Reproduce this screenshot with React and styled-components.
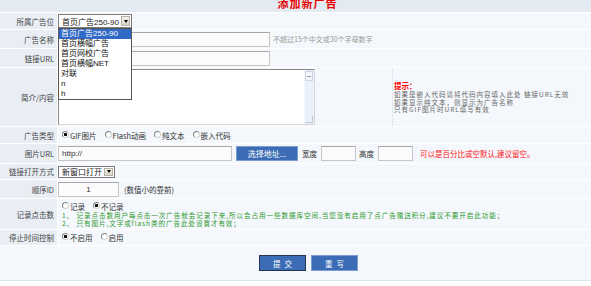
import React from 'react';
import styled, { createGlobalStyle } from 'styled-components';

const GlobalStyle = createGlobalStyle`
  body {
    margin: 0;
    background: #fff;
    font-family: "Noto Sans CJK SC", "Liberation Sans", sans-serif;
    font-size: 7.5px;
    color: #333;
  }
  * { box-sizing: border-box; }
`;

const Page = styled.div`
  width: 591px;
  background: #fff;
`;

const Header = styled.div`
  height: 12px;
  margin-bottom: 1px;
  background: #e4eaf2;
  overflow: hidden;
  display: flex;
  justify-content: center;
  padding-left: 24px;
`;

const Title = styled.h1`
  margin: -4px 0 0;
  font-size: 11px;
  line-height: 14px;
  font-weight: bold;
  color: #e60000;
  letter-spacing: 1px;
`;

const Row = styled.div`
  display: grid;
  grid-template-columns: 57px 1fr;
  column-gap: 1px;
  height: ${p => p.$h}px;
  margin-bottom: 1px;
`;

const Label = styled.div`
  background: #e9eef5;
  display: flex;
  align-items: center;
  justify-content: flex-end;
  padding-right: 3px;
  white-space: nowrap;
  color: #444;
`;

const Cell = styled.div`
  position: relative;
  background: #f4f7fb;
  display: flex;
  flex-direction: ${p => (p.$column ? 'column' : 'row')};
  align-items: ${p => (p.$column ? 'flex-start' : 'center')};
  justify-content: ${p => (p.$column ? 'center' : 'flex-start')};
  padding-left: ${p => p.$pad || 0}px;
  white-space: nowrap;
`;

const Select = styled.div`
  width: ${p => p.$w}px;
  height: ${p => p.$h}px;
  border: 1px solid #7a7a7a;
  background: #fff;
  display: flex;
  align-items: center;
  justify-content: space-between;
  padding-left: 3px;
  font-family: "Liberation Sans", "Noto Sans CJK SC", sans-serif;
  font-size: 8px;
  color: #222;
`;

const SelectArrow = styled.span`
  width: 9px;
  height: calc(100% - 2px);
  margin-right: 1px;
  background: linear-gradient(#f6f4ee, #d9d5c6);
  border: 1px solid #b5b2a5;
  display: flex;
  align-items: center;
  justify-content: center;
  &::after {
    content: '';
    border-left: 2.5px solid transparent;
    border-right: 2.5px solid transparent;
    border-top: 3px solid #000;
  }
`;

const OptionList = styled.div`
  position: absolute;
  top: 15px;
  left: 0;
  width: 74px;
  z-index: 10;
  background: #fff;
  border: 1px solid #555;
  font-family: "Liberation Sans", "Noto Sans CJK SC", sans-serif;
  font-size: 8px;
`;

const Option = styled.div`
  height: 10px;
  line-height: 10px;
  padding-left: 2px;
  background: ${p => (p.$active ? '#3169c6' : '#fff')};
  color: ${p => (p.$active ? '#fff' : '#111')};
`;

const TextInput = styled.input`
  width: ${p => p.$w}px;
  height: 15px;
  margin: 0;
  border: 1px solid #c6c6c6;
  border-top-color: #a8a8a8;
  background: #fbfbfb;
  font-family: "Liberation Sans", "Noto Sans CJK SC", sans-serif;
  font-size: 8px;
  padding: 0 3px;
  color: #333;
  outline: none;
  text-align: ${p => (p.$center ? 'center' : 'left')};
`;

const Hint = styled.span`
  margin-left: 3px;
  font-size: 7px;
  color: #999;
`;

const AreaCell = styled.div`
  width: 334px;
  height: 100%;
  display: flex;
  align-items: center;
`;

const AreaBox = styled.div`
  width: 257px;
  height: 56px;
  display: flex;
  border: 1px solid;
  border-color: #8a8a8a #d6d6d6 #d6d6d6 #8a8a8a;
  background: #fff;
`;

const Area = styled.textarea`
  flex: 1;
  border: none;
  resize: none;
  outline: none;
  background: #fff;
  margin: 0;
`;

const ScrollBar = styled.div`
  width: 10px;
  display: flex;
  flex-direction: column;
  background: #eaf1fb;
  border-left: 1px solid #f4f7fb;
`;

const ScrollButton = styled.div`
  height: 10px;
  margin: 1px 1px 0 0;
  border: 1px solid #c9d4e3;
  background: #f2f5f9;
  display: flex;
  align-items: center;
  justify-content: center;
  &::after {
    content: '';
    width: 4px;
    border-top: 1px solid #8d9cb2;
  }
`;

const ScrollTrack = styled.div`
  flex: 1;
`;

const ScrollGrip = styled.div`
  height: 7px;
  margin: 0 1px 1px 0;
  border-right: 1px solid #bfc9d6;
  border-bottom: 1px solid #bfc9d6;
`;

const TipCell = styled.div`
  flex: 1;
  height: 100%;
  border-left: 1px solid #e2e8f0;
  padding: 2px 0 0 1px;
  display: flex;
  flex-direction: column;
  justify-content: center;
  font-size: 6.5px;
  letter-spacing: 1px;
  line-height: 7.8px;
  color: #666;
`;

const TipTitle = styled.div`
  color: #f00;
  font-weight: bold;
  font-size: 7.5px;
  letter-spacing: 0;
  line-height: 8px;
  margin-bottom: 1px;
`;

const RadioGroup = styled.div`
  display: flex;
  align-items: center;
  gap: 8px;
  height: ${p => p.$h || 10}px;
`;

const RadioLabel = styled.label`
  display: flex;
  align-items: center;
  gap: 1px;
  color: #333;
`;

const Radio = styled.input.attrs({ type: 'radio' })`
  appearance: none;
  width: 7px;
  height: 7px;
  margin: 0 0 2px;
  border: 1px solid;
  border-color: #848484 #d2d2d2 #d2d2d2 #848484;
  border-radius: 50%;
  background: #fff;
  &:checked {
    background: radial-gradient(circle, #111 0 1.4px, #fff 1.9px);
  }
`;

const BlueButton = styled.button`
  height: ${p => p.$h}px;
  width: ${p => p.$w}px;
  margin: 0;
  padding: 0 0 0 ${p => p.$space || 0}px;
  background: #3b6cb5;
  border: 1px solid ${p => (p.$focus ? '#26364f' : '#7b9dd0')};
  color: #fff;
  font-family: "Noto Sans CJK SC", sans-serif;
  font-size: ${p => p.$fs || 7.5}px;
  letter-spacing: ${p => p.$space || 0}px;
`;

const Gap = styled.span`
  display: inline-block;
  width: ${p => p.$w}px;
`;

const Warn = styled.span`
  color: #f22;
`;

const Green = styled.div`
  color: #2f9a2f;
  font-size: 6.6px;
  letter-spacing: 0.9px;
  line-height: 8px;
`;

const Footer = styled.div`
  height: 35px;
  background: #f4f7fb;
  border-bottom: 1px solid #dde3eb;
  display: flex;
  align-items: center;
  justify-content: center;
  gap: 5px;
  padding-left: 26px;
`;

const positions = ['首页广告250-90', '首页横幅广告', '首页网校广告', '首页横幅NET', '对联', 'n', 'h'];

export default function App() {
  return (
    <Page>
      <GlobalStyle />
      <Header>
        <Title>添加新广告</Title>
      </Header>

      <Row $h={16}>
        <Label>所属广告位</Label>
        <Cell>
          <Select $w={74} $h={14}>
            首页广告250-90
            <SelectArrow />
          </Select>
          <OptionList>
            {positions.map((p, i) => (
              <Option key={p} $active={i === 0}>{p}</Option>
            ))}
          </OptionList>
        </Cell>
      </Row>

      <Row $h={18}>
        <Label>广告名称</Label>
        <Cell>
          <TextInput $w={212} />
          <Hint>不超过15个中文或30个字母数字</Hint>
        </Cell>
      </Row>

      <Row $h={18}>
        <Label>链接URL</Label>
        <Cell>
          <TextInput $w={212} />
        </Cell>
      </Row>

      <Row $h={58}>
        <Label>简介/内容</Label>
        <Cell>
          <AreaCell>
            <AreaBox>
              <Area />
              <ScrollBar>
                <ScrollButton />
                <ScrollTrack />
                <ScrollGrip />
              </ScrollBar>
            </AreaBox>
          </AreaCell>
          <TipCell>
            <TipTitle>提示：</TipTitle>
            <div>如果是嵌入代码请将代码内容填入此处 链接URL无效</div>
            <div>如果显示纯文本，则显示为广告名称</div>
            <div>只有GIF图片时URL填写有效</div>
          </TipCell>
        </Cell>
      </Row>

      <Row $h={16}>
        <Label>广告类型</Label>
        <Cell $pad={4}>
          <RadioGroup>
            <RadioLabel><Radio name="type" defaultChecked />GIF图片</RadioLabel>
            <RadioLabel><Radio name="type" />Flash动画</RadioLabel>
            <RadioLabel><Radio name="type" />纯文本</RadioLabel>
            <RadioLabel><Radio name="type" />嵌入代码</RadioLabel>
          </RadioGroup>
        </Cell>
      </Row>

      <Row $h={19}>
        <Label>图片URL</Label>
        <Cell>
          <TextInput $w={174} defaultValue="http://" />
          <Gap $w={4} />
          <BlueButton $w={62} $h={15} $fs={8}>选择地址...</BlueButton>
          <Gap $w={4} />
          宽度
          <Gap $w={4} />
          <TextInput $w={35} />
          <Gap $w={3} />
          高度
          <Gap $w={4} />
          <TextInput $w={35} />
          <Gap $w={7} />
          <Warn>可以是百分比或空默认,建议留空。</Warn>
        </Cell>
      </Row>

      <Row $h={15}>
        <Label>链接打开方式</Label>
        <Cell>
          <Select $w={57} $h={12}>
            新窗口打开
            <SelectArrow />
          </Select>
        </Cell>
      </Row>

      <Row $h={18}>
        <Label>顺序ID</Label>
        <Cell>
          <TextInput $w={61} $center defaultValue="1" />
          <Gap $w={5} />
          (数值小的靠前)
        </Cell>
      </Row>

      <Row $h={30}>
        <Label>记录点击数</Label>
        <Cell $column $pad={4}>
          <RadioGroup>
            <RadioLabel><Radio name="hits" />记录</RadioLabel>
            <RadioLabel><Radio name="hits" defaultChecked />不记录</RadioLabel>
          </RadioGroup>
          <Green>1、 记录点击数用户每点击一次广告就会记录下来,所以会占用一些数据库空间,当您没有启用了点广告赠送积分,建议不要开启此功能；</Green>
          <Green>2、 只有图片,文字或flash类的广告此处设置才有效；</Green>
        </Cell>
      </Row>

      <Row $h={15}>
        <Label>停止时间控制</Label>
        <Cell $pad={4}>
          <RadioGroup>
            <RadioLabel><Radio name="stop" defaultChecked />不启用</RadioLabel>
            <RadioLabel><Radio name="stop" />启用</RadioLabel>
          </RadioGroup>
        </Cell>
      </Row>

      <Footer>
        <BlueButton $w={47} $h={16} $space={4} $focus>提交</BlueButton>
        <BlueButton $w={47} $h={16} $space={4}>重写</BlueButton>
      </Footer>
    </Page>
  );
}
